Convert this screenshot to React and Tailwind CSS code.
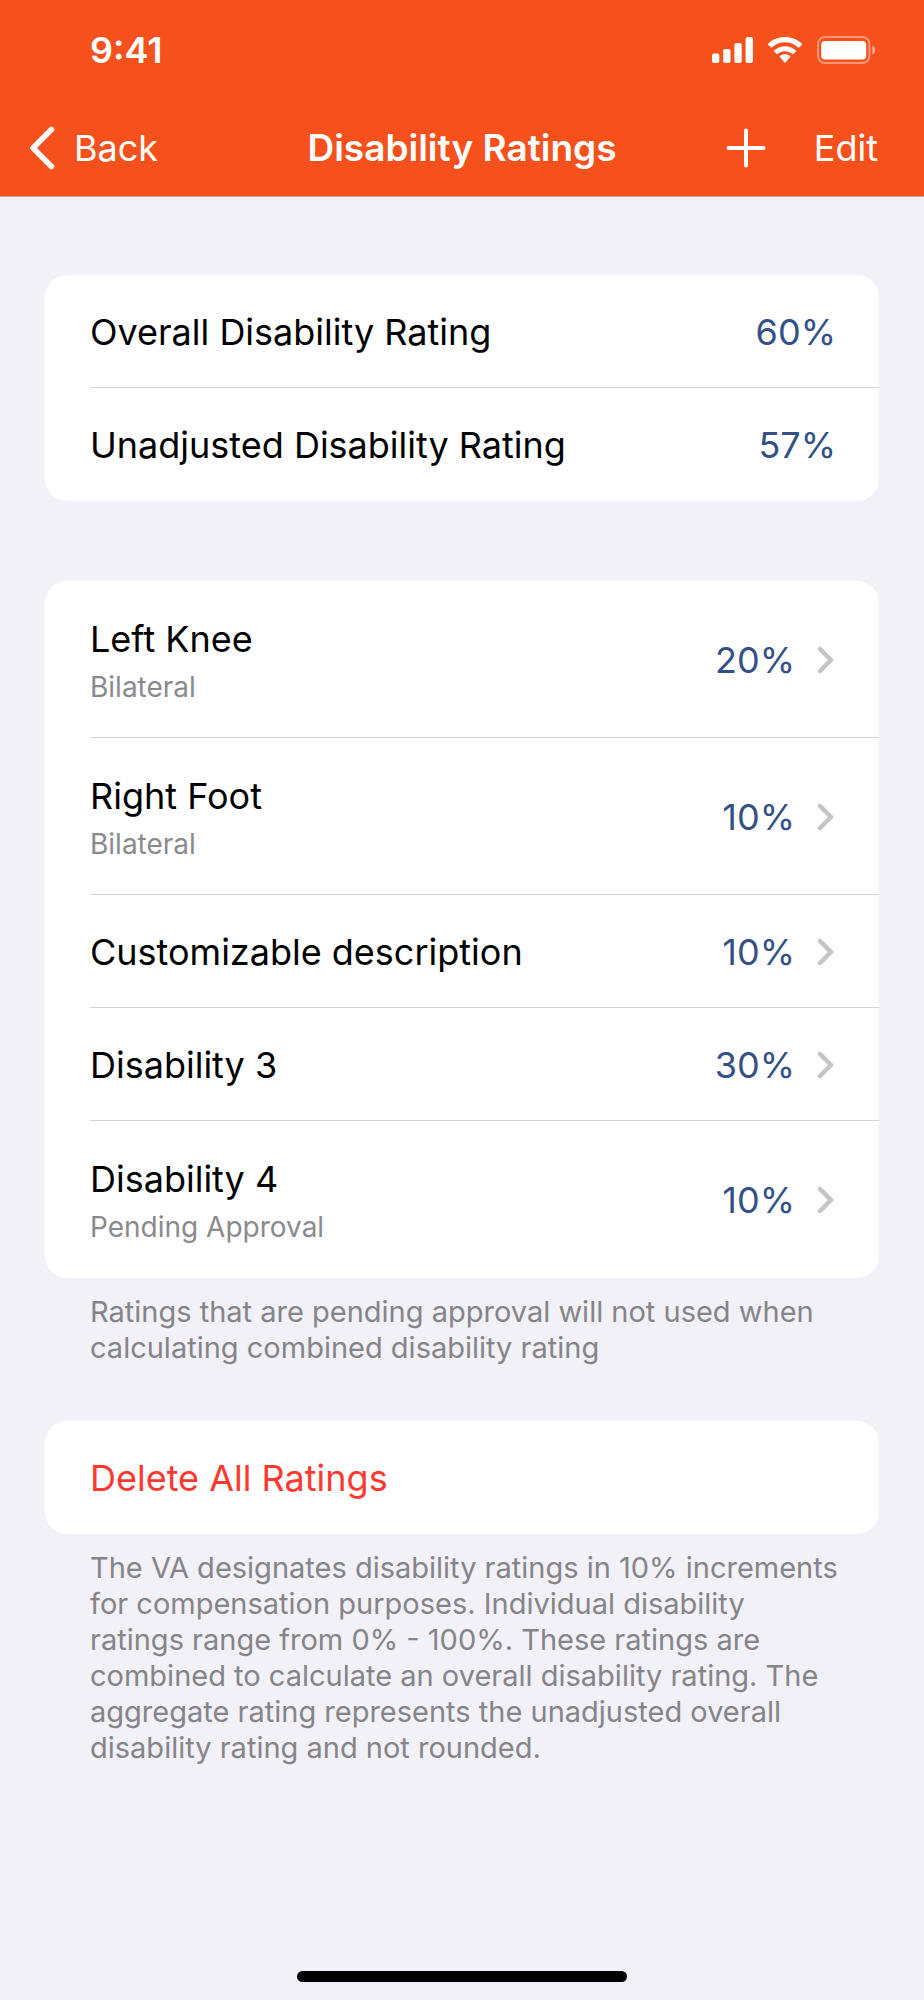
const summary = [
  { label: 'Overall Disability Rating', value: '60%' },
  { label: 'Unadjusted Disability Rating', value: '57%' },
];

const ratings = [
  { label: 'Left Knee', note: 'Bilateral', value: '20%' },
  { label: 'Right Foot', note: 'Bilateral', value: '10%' },
  { label: 'Customizable description', value: '10%' },
  { label: 'Disability 3', value: '30%' },
  { label: 'Disability 4', note: 'Pending Approval', value: '10%' },
];

function SignalIcon() {
  return (
    <svg width="41" height="26" viewBox="0 0 41 26" fill="currentColor" aria-hidden="true">
      <rect x="0" y="16.5" width="7.3" height="9.5" rx="2" />
      <rect x="11.2" y="12" width="7.3" height="14" rx="2" />
      <rect x="22.4" y="6" width="7.3" height="20" rx="2" />
      <rect x="33.6" y="0" width="7.3" height="26" rx="2" />
    </svg>
  );
}

function WifiIcon() {
  return (
    <svg width="36" height="26" viewBox="0 0 36 26" fill="currentColor" aria-hidden="true">
      <path d="M18 5.3c5 0 9.6 1.9 13.1 5.2.3.2.7.2.9 0l2.900-2.800c.3-.3.3-.7 0-1C25.500-2.200 10.500-2.200 1.100 6.700c-.3.3-.3.700 0 1L4 10.500c.2.200.6.200.9 0C8.400 7.200 13 5.300 18 5.300Z" />
      <path d="M18 14.300c2.700 0 5.300 1 7.300 2.800.3.300.700.300 1 0l2.600-2.700c.3-.3.3-.7 0-1-6.200-5.700-15.600-5.700-21.800 0-.3.300-.3.700 0 1l2.600 2.700c.3.300.7.300 1 0 2-1.800 4.600-2.800 7.300-2.800Z" />
      <path d="M23.100 20.100c.3-.3.3-.7 0-1-2.900-2.500-7.300-2.500-10.200 0-.3.300-.3.700 0 1l4.600 5.500c.3.300.700.300 1 0l4.600-5.500Z" />
    </svg>
  );
}

function BatteryIcon() {
  return (
    <svg width="59" height="28" viewBox="0 0 59 28" aria-hidden="true">
      <rect x="1" y="1" width="51.5" height="26" rx="7" fill="none" stroke="currentColor" strokeWidth="2" opacity="0.4" />
      <rect x="4.2" y="5" width="45" height="18.5" rx="4" fill="currentColor" />
      <path d="M55.300 9.500v9.200c1.800-.8 3-2.500 3-4.600s-1.200-3.800-3-4.600Z" fill="currentColor" opacity="0.5" />
    </svg>
  );
}

function Disclosure() {
  return (
    <svg className="ml-[22px] shrink-0 text-[#c5c5c7]" width="17" height="28" viewBox="0 0 17 28" fill="none" stroke="currentColor" strokeWidth="4.5" strokeLinecap="round" strokeLinejoin="round" aria-hidden="true">
      <path d="M3 3 14 14 3 25" />
    </svg>
  );
}

function StatusBar() {
  return (
    <div className="flex h-[100px] items-center justify-between pl-[90px] pr-12">
      <span className="leading-10 font-semibold">9:41</span>
      <div className="flex items-center gap-[14px]">
        <SignalIcon />
        <WifiIcon />
        <BatteryIcon />
      </div>
    </div>
  );
}

function NavBar() {
  return (
    <nav className="grid h-24 grid-cols-[1fr_auto_1fr] items-center px-7">
      <button type="button" className="flex items-center gap-[18px] justify-self-start">
        <svg width="28" height="44" viewBox="0 0 28 44" fill="none" stroke="currentColor" strokeWidth="5.5" strokeLinecap="round" strokeLinejoin="round" aria-hidden="true">
          <path d="M23.5 3.500 5 22 23.500 40.500" />
        </svg>
        Back
      </button>
      <h1 className="text-[37px] font-semibold">Disability Ratings</h1>
      <div className="mr-[18px] flex items-center gap-12 justify-self-end">
        <button type="button" aria-label="Add rating">
          <svg width="40" height="40" viewBox="0 0 40 40" stroke="currentColor" strokeWidth="4" strokeLinecap="round" aria-hidden="true">
            <path d="M20 2.500v35M2.500 20h35" />
          </svg>
        </button>
        <button type="button">Edit</button>
      </div>
    </nav>
  );
}

function Card({ children, className = '' }) {
  return <ul className={`overflow-hidden rounded-[22px] bg-white pl-[45px] ${className}`}>{children}</ul>;
}

function Footnote({ children }) {
  return <p className="mt-4 pr-[37px] pl-[45px] text-[29px] leading-9 text-[#858489]">{children}</p>;
}

export default function App() {
  return (
    <div className="flex min-h-screen flex-col bg-[#f2f1f7] font-['Inter',sans-serif] text-[36px] leading-[56px] text-black">
      <header className="border-b border-[#d9a79c] bg-[#f6511d] text-white">
        <StatusBar />
        <NavBar />
      </header>

      <main className="px-[45px] pt-[78px]">
        <Card>
          {summary.map((item) => (
            <li key={item.label} className="flex items-center justify-between border-b border-[#d4d4d6] pt-[29px] pr-[43px] pb-[27px] last:border-transparent">
              <span>{item.label}</span>
              <span className="text-[#335089]">{item.value}</span>
            </li>
          ))}
        </Card>

        <Card className="mt-20">
          {ratings.map((item) => (
            <li key={item.label} className="border-b border-[#d4d4d6] last:border-transparent">
              <button type="button" className={`flex w-full items-center pr-[45px] text-left ${item.note ? 'pt-[30px] pb-7' : 'pt-[29px] pb-[27px]'}`}>
                <span className={item.note ? 'grow pb-1' : 'grow'}>
                  <span className="block">{item.label}</span>
                  {item.note && <span className="mt-[2px] block text-[28px] leading-9 text-[#8a8a8e]">{item.note}</span>}
                </span>
                <span className="text-[#335089]">{item.value}</span>
                <Disclosure />
              </button>
            </li>
          ))}
        </Card>
        <Footnote>Ratings that are pending approval will not used when calculating combined disability rating</Footnote>

        <Card className="mt-[55px]">
          <li>
            <button type="button" className="w-full pt-[29px] pb-7 text-left text-[#ff3830]">Delete All Ratings</button>
          </li>
        </Card>
        <Footnote>
          The VA designates disability ratings in 10% increments for compensation purposes. Individual disability ratings range from 0% - 100%. These ratings are combined to calculate an overall disability rating. The aggregate rating represents the unadjusted overall disability rating and not rounded.
        </Footnote>
      </main>

      <div className="mx-auto mt-auto mb-[18px] h-[11px] w-[330px] rounded-full bg-black" />
    </div>
  );
}
